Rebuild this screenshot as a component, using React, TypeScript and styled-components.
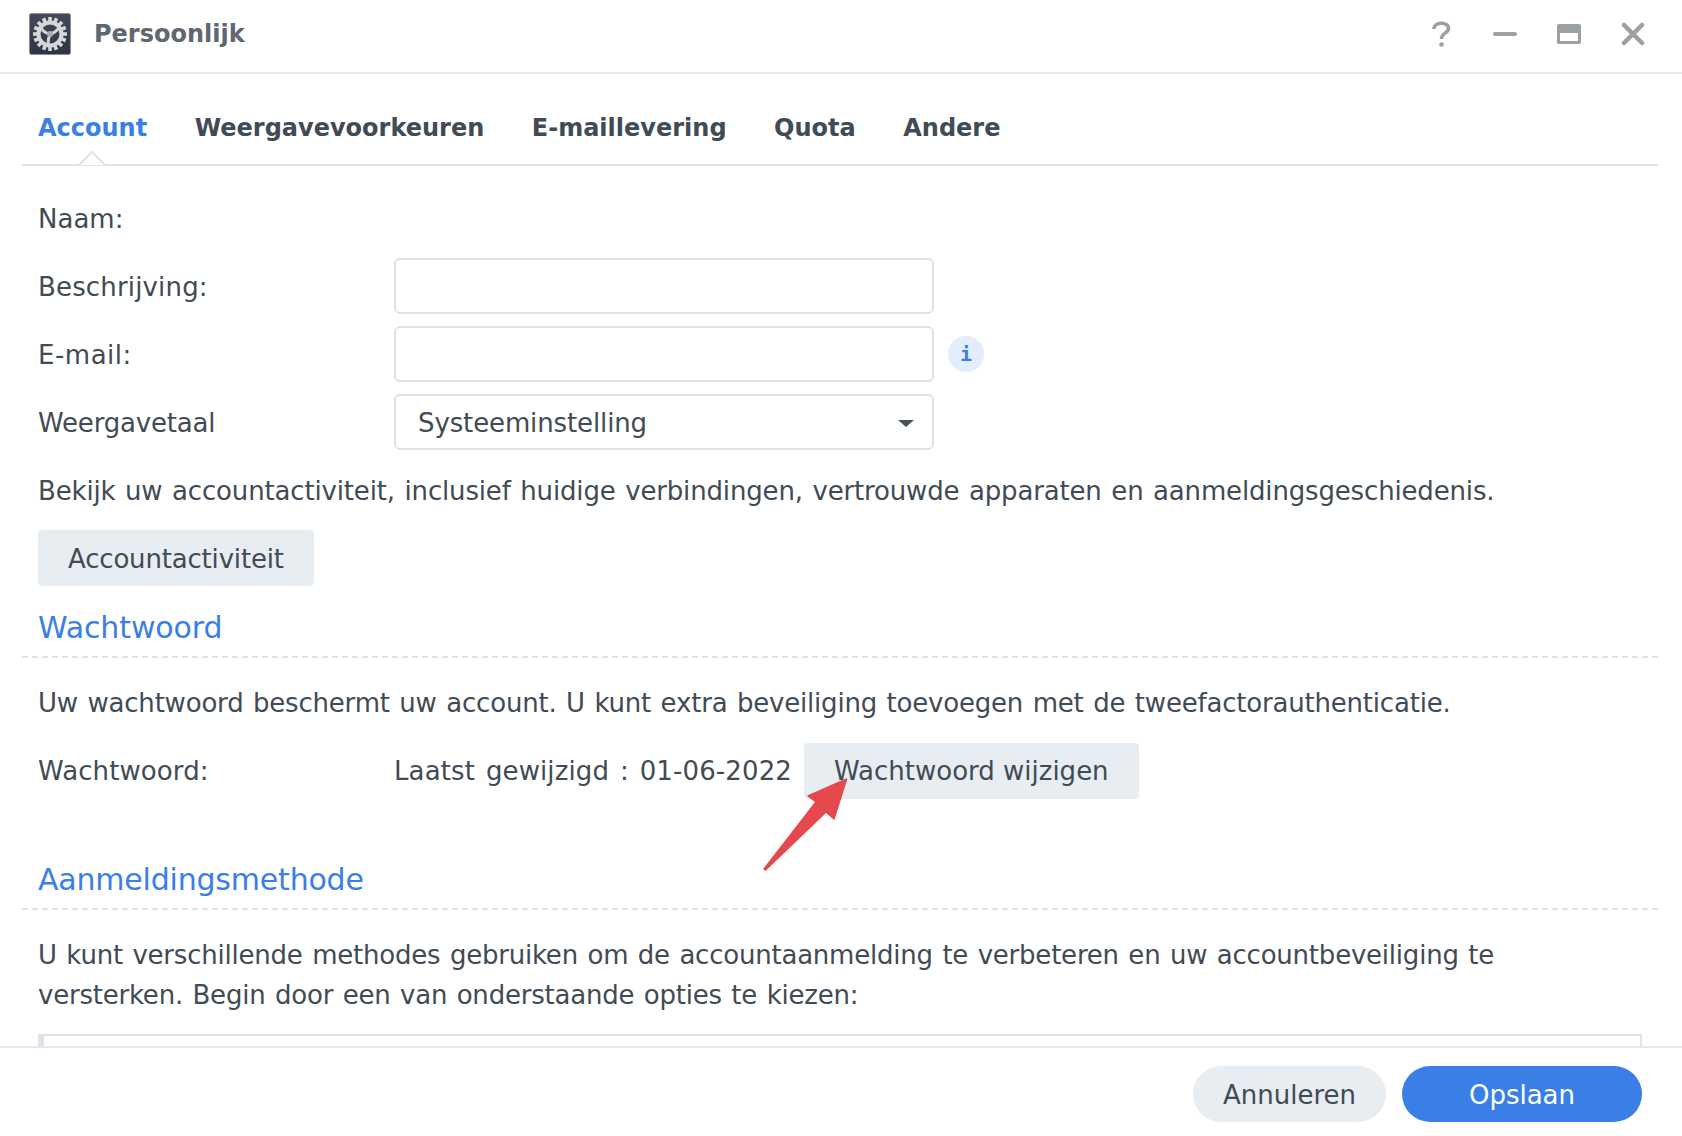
import React from "react";
import styled, { createGlobalStyle } from "styled-components";

const GlobalStyle = createGlobalStyle`
    html, body {
        margin: 0;
        padding: 0;
        background: #fff;
    }
    body {
        font-family: "DejaVu Sans", sans-serif;
        color: #414b55;
    }
`;

const GearIcon = () => (
    <svg width="42" height="42" viewBox="0 0 42 42">
        <defs>
            <linearGradient id="gearBg" x1="0" y1="0" x2="0" y2="1">
                <stop offset="0" stopColor="#454a5a" />
                <stop offset="1" stopColor="#2f3444" />
            </linearGradient>
        </defs>
        <rect x="0.5" y="0.5" width="41" height="41" rx="2" fill="url(#gearBg)" stroke="#8a8f98" />
        <g fill="#d6d7d8">
            {Array.from({ length: 16 }).map((_, i) => (
                <rect key={i} x="19.2" y="4" width="3.6" height="5" transform={`rotate(${i * 22.5} 21 21)`} />
            ))}
        </g>
        <circle cx="21" cy="21" r="11.5" fill="none" stroke="#d6d7d8" strokeWidth="4" />
        <path d="M21 21 Q15 20 12 15 M21 21 Q26 20 30 15 M21 21 Q19 26 19 31" fill="none" stroke="#d6d7d8" strokeWidth="3" />
        <circle cx="21" cy="21" r="3" fill="#a9acb1" />
    </svg>
);

const Arrow = () => (
    <ArrowSvg width="90" height="100" viewBox="0 0 90 100">
        <path d="M2 98 L54 31 L46 25 L84.6 8 L72 48 L64 41 L3.5 99 Z" fill="#e5484d" stroke="#e5484d" strokeWidth="1.5" strokeLinejoin="round" />
    </ArrowSvg>
);

const App: React.FC = () => {
    const tabs = ["Account", "Weergavevoorkeuren", "E-maillevering", "Quota", "Andere"];

    return (
        <Window>
            <GlobalStyle />
            <TitleBar>
                <GearIcon />
                <Title>Persoonlijk</Title>
                <WindowControls>
                    <svg width="24" height="26" viewBox="0 0 24 26">
                        <path d="M5 8 C5 0.5 19.5 0.5 19.5 7.5 C19.5 12 12.5 12 12.5 18" fill="none" stroke="#9ba0a4" strokeWidth="3.6" />
                        <circle cx="12.5" cy="23.5" r="2.3" fill="#9ba0a4" />
                    </svg>
                    <svg width="24" height="24" viewBox="0 0 24 24">
                        <rect x="0" y="10" width="24" height="4" rx="2" fill="#9ba0a4" />
                    </svg>
                    <svg width="24" height="24" viewBox="0 0 24 24">
                        <path fillRule="evenodd" d="M2 2 H22 a2 2 0 0 1 2 2 V20 a2 2 0 0 1 -2 2 H2 a2 2 0 0 1 -2 -2 V4 a2 2 0 0 1 2 -2 Z M3 11 V19 H21 V11 Z" fill="#9ba0a4" />
                    </svg>
                    <svg width="24" height="24" viewBox="0 0 24 24">
                        <path d="M3 3 L21 21 M21 3 L3 21" stroke="#9ba0a4" strokeWidth="4.5" strokeLinecap="round" />
                    </svg>
                </WindowControls>
            </TitleBar>

            <Body>
                <TabBar>
                    {tabs.map((tab, i) => (
                        <Tab key={tab} active={i === 0}>{tab}</Tab>
                    ))}
                    <TabNotch width="28" height="15" viewBox="0 0 28 15">
                        <path d="M0 14 H1 L14 1 L27 14 H28" fill="#fff" stroke="#dce2ea" strokeWidth="2" />
                    </TabNotch>
                </TabBar>

                <Section first>
                    <FormRow>
                        <Label nudge>Naam:</Label>
                    </FormRow>
                    <FormRow>
                        <Label nudge tracking={0.16}>Beschrijving:</Label>
                        <Input />
                    </FormRow>
                    <FormRow>
                        <Label nudge tracking={0.5}>E-mail:</Label>
                        <Input />
                        <InfoBadge>i</InfoBadge>
                    </FormRow>
                    <FormRow>
                        <Label nudge tracking={-0.18}>Weergavetaal</Label>
                        <Select>
                            Systeeminstelling
                            <Caret />
                        </Select>
                    </FormRow>
                    <FormRow tracking={-0.16} nudge>Bekijk uw accountactiviteit, inclusief huidige verbindingen, vertrouwde apparaten en aanmeldingsgeschiedenis.</FormRow>
                    <FormRow>
                        <Button nudge>Accountactiviteit</Button>
                    </FormRow>
                </Section>

                <SectionHead>Wachtwoord</SectionHead>
                <Section>
                    <FormRow tracking={-0.2}>Uw wachtwoord beschermt uw account. U kunt extra beveiliging toevoegen met de tweefactorauthenticatie.</FormRow>
                    <FormRow>
                        <Label tracking={0.1}>Wachtwoord:</Label>
                        <LastChanged>Laatst gewijzigd : 01-06-2022</LastChanged>
                        <PasswordButton>
                            Wachtwoord wijzigen
                            <Arrow />
                        </PasswordButton>
                    </FormRow>
                </Section>

                <SectionHead spaced>Aanmeldingsmethode</SectionHead>
                <Section>
                    <Paragraph>
                        U kunt verschillende methodes gebruiken om de accountaanmelding te verbeteren en uw accountbeveiliging te versterken. Begin door een van onderstaande opties te kiezen:
                    </Paragraph>
                    <MethodBox />
                </Section>
            </Body>

            <Footer>
                <PillButton>Annuleren</PillButton>
                <PillButton primary>Opslaan</PillButton>
            </Footer>
        </Window>
    );
};

export default App;

const Window = styled.div`
    display: flex;
    flex-direction: column;
    height: 1136px;
    overflow: hidden;
    font-size: 26px;
    line-height: 40px;
    letter-spacing: -0.18px;
    word-spacing: 1.5px;
`;

const TitleBar = styled.header`
    flex: none;
    display: flex;
    align-items: center;
    height: 74px;
    padding: 0 37px 4px 29px;
    border-bottom: 2px solid #e4e8ed;
    box-sizing: border-box;
`;

const Title = styled.h1`
    margin: 0 0 0 23px;
    font-size: 24px;
    font-weight: 700;
    letter-spacing: 0;
    color: #5f6770;
`;

const WindowControls = styled.div`
    margin-left: auto;
    display: flex;
    align-items: center;
    gap: 40px;
`;

const Body = styled.main`
    flex: 1;
    min-height: 0;
    overflow: hidden;
    padding: 0 24px 0 22px;
`;

const TabBar = styled.nav`
    position: relative;
    display: flex;
    gap: 47.5px;
    height: 92px;
    padding: 34px 0 0 16px;
    box-sizing: border-box;
    border-bottom: 2px solid #dce2ea;
`;

const Tab = styled.div<{ active: boolean }>`
    font-size: 24px;
    font-weight: 700;
    letter-spacing: 0;
    line-height: 40px;
    color: ${({ active }) => (active ? "#3a7fe6" : "#414b55")};
`;

const TabNotch = styled.svg`
    position: absolute;
    left: 56px;
    bottom: -2px;
`;

const Section = styled.section<{ first?: boolean }>`
    padding: ${({ first }) => (first ? "7px" : "0")} 16px 0;
`;

const FormRow = styled.div<{ tracking?: number; nudge?: boolean }>`
    display: flex;
    align-items: center;
    min-height: 56px;
    margin-top: 12px;
    box-sizing: border-box;
    padding-top: ${({ nudge }) => (nudge ? "2px" : "0")};
    ${({ tracking }) => (tracking !== undefined ? `letter-spacing: ${tracking}px;` : "")}

    &:first-child {
        margin-top: 17px;
    }
`;

const Label = styled.div<{ tracking?: number; nudge?: boolean }>`
    flex: none;
    width: 356px;
    padding-top: ${({ nudge }) => (nudge ? "2px" : "0")};
    letter-spacing: ${({ tracking }) => tracking ?? 0}px;
`;

const LastChanged = styled.span`
    letter-spacing: 0.12px;
    word-spacing: 2.5px;
`;

const Input = styled.div`
    width: 540px;
    height: 56px;
    border: 2px solid #dce2ea;
    border-radius: 6px;
    box-sizing: border-box;
`;

const InfoBadge = styled.div`
    width: 36px;
    height: 36px;
    margin-left: 14px;
    border-radius: 50%;
    background: #e3edfc;
    color: #3a7fe6;
    font-family: "DejaVu Sans Mono", monospace;
    font-size: 20px;
    font-weight: 700;
    line-height: 36px;
    text-align: center;
`;

const Select = styled(Input)`
    position: relative;
    display: flex;
    align-items: center;
    padding: 2px 0 0 22px;
    letter-spacing: -0.12px;
`;

const Caret = styled.span`
    position: absolute;
    right: 18px;
    top: 24px;
    border-left: 8px solid transparent;
    border-right: 8px solid transparent;
    border-top: 7px solid #4a525b;
`;

const Button = styled.div<{ nudge?: boolean }>`
    height: 56px;
    padding: ${({ nudge }) => (nudge ? "2px" : "0")} 30px 0;
    box-sizing: border-box;
    display: flex;
    align-items: center;
    background: #e8edf2;
    border-radius: 4px;
`;

const PasswordButton = styled(Button)`
    position: relative;
    margin-left: 12px;
    letter-spacing: 0;
    word-spacing: 0;
`;

const ArrowSvg = styled.svg`
    position: absolute;
    left: -42px;
    top: 28px;
`;

const SectionHead = styled.h2<{ spaced?: boolean }>`
    margin: ${({ spaced }) => (spaced ? "61px" : "22px")} 0 0;
    padding: 0 16px 8px;
    font-size: 30px;
    font-weight: 400;
    line-height: 40px;
    letter-spacing: ${({ spaced }) => (spaced ? "-0.2px" : "-0.1px")};
    color: #3a7fe6;
    border-bottom: 2px dashed #dce2ea;
`;

const Paragraph = styled.p`
    margin: 25px 0 0;
    letter-spacing: -0.22px;
`;

const MethodBox = styled.div`
    height: 60px;
    margin-top: 19px;
    border: 2px solid #dce2ea;
    border-left-width: 6px;
    box-sizing: border-box;
`;

const Footer = styled.footer`
    flex: none;
    display: flex;
    justify-content: flex-end;
    gap: 16px;
    height: 90px;
    padding: 18px 40px 0 0;
    box-sizing: border-box;
    background: #fff;
    border-top: 2px solid #e4e8ed;
    position: relative;
`;

const PillButton = styled.div<{ primary?: boolean }>`
    height: 56px;
    min-width: ${({ primary }) => (primary ? "240px" : "193px")};
    padding-top: 2px;
    display: flex;
    align-items: center;
    justify-content: center;
    border-radius: 28px;
    box-sizing: border-box;
    letter-spacing: 0;
    background: ${({ primary }) => (primary ? "#3a7fe6" : "#e8edf2")};
    color: ${({ primary }) => (primary ? "#fff" : "#414b55")};
`;
